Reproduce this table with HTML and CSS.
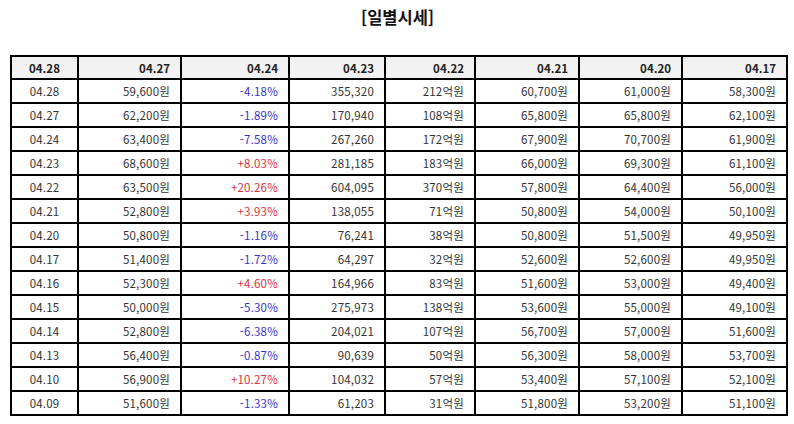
FILE: index.html
```html
<!DOCTYPE html>
<html lang="ko">
<head>
<meta charset="utf-8">
<title>일별시세</title>
<link rel="stylesheet" href="styles.css">
</head>
<body>
<div class="page">
  <h1 class="title">[일별시세]</h1>
  <table class="daily">
    <colgroup>
      <col class="c0"><col class="c1"><col class="c2"><col class="c3"><col class="c4"><col class="c5"><col class="c6"><col class="c7">
    </colgroup>
    <thead>
      <tr><th class="date">04.28</th><th>04.27</th><th>04.24</th><th>04.23</th><th>04.22</th><th>04.21</th><th>04.20</th><th>04.17</th></tr>
    </thead>
    <tbody>
      <tr><td class="date">04.28</td><td>59,600원</td><td class="dn">-4.18%</td><td>355,320</td><td>212억원</td><td>60,700원</td><td>61,000원</td><td>58,300원</td></tr>
      <tr><td class="date">04.27</td><td>62,200원</td><td class="dn">-1.89%</td><td>170,940</td><td>108억원</td><td>65,800원</td><td>65,800원</td><td>62,100원</td></tr>
      <tr><td class="date">04.24</td><td>63,400원</td><td class="dn">-7.58%</td><td>267,260</td><td>172억원</td><td>67,900원</td><td>70,700원</td><td>61,900원</td></tr>
      <tr><td class="date">04.23</td><td>68,600원</td><td class="up">+8.03%</td><td>281,185</td><td>183억원</td><td>66,000원</td><td>69,300원</td><td>61,100원</td></tr>
      <tr><td class="date">04.22</td><td>63,500원</td><td class="up">+20.26%</td><td>604,095</td><td>370억원</td><td>57,800원</td><td>64,400원</td><td>56,000원</td></tr>
      <tr><td class="date">04.21</td><td>52,800원</td><td class="up">+3.93%</td><td>138,055</td><td>71억원</td><td>50,800원</td><td>54,000원</td><td>50,100원</td></tr>
      <tr><td class="date">04.20</td><td>50,800원</td><td class="dn">-1.16%</td><td>76,241</td><td>38억원</td><td>50,800원</td><td>51,500원</td><td>49,950원</td></tr>
      <tr><td class="date">04.17</td><td>51,400원</td><td class="dn">-1.72%</td><td>64,297</td><td>32억원</td><td>52,600원</td><td>52,600원</td><td>49,950원</td></tr>
      <tr><td class="date">04.16</td><td>52,300원</td><td class="up">+4.60%</td><td>164,966</td><td>83억원</td><td>51,600원</td><td>53,000원</td><td>49,400원</td></tr>
      <tr><td class="date">04.15</td><td>50,000원</td><td class="dn">-5.30%</td><td>275,973</td><td>138억원</td><td>53,600원</td><td>55,000원</td><td>49,100원</td></tr>
      <tr><td class="date">04.14</td><td>52,800원</td><td class="dn">-6.38%</td><td>204,021</td><td>107억원</td><td>56,700원</td><td>57,000원</td><td>51,600원</td></tr>
      <tr><td class="date">04.13</td><td>56,400원</td><td class="dn">-0.87%</td><td>90,639</td><td>50억원</td><td>56,300원</td><td>58,000원</td><td>53,700원</td></tr>
      <tr><td class="date">04.10</td><td>56,900원</td><td class="up">+10.27%</td><td>104,032</td><td>57억원</td><td>53,400원</td><td>57,100원</td><td>52,100원</td></tr>
      <tr><td class="date">04.09</td><td>51,600원</td><td class="dn">-1.33%</td><td>61,203</td><td>31억원</td><td>51,800원</td><td>53,200원</td><td>51,100원</td></tr>
    </tbody>
  </table>
</div>
</body>
</html>
```
FILE: styles.css
```css
html, body {
  margin: 0;
  padding: 0;
  background: #ffffff;
}
body {
  font-family: "Noto Sans CJK KR", "Noto Sans", sans-serif;
  color: #333333;
}
.page {
  padding: 7px 9px 0 10px;
}
.title {
  margin: 0;
  height: 48px;
  font-size: 16.5px;
  line-height: 20px;
  font-weight: bold;
  color: #111111;
  text-align: center;
}
.daily {
  width: 776px;
  border: 1px solid #000;
  border-spacing: 0;
  table-layout: fixed;
  font-size: 11.5px;
  letter-spacing: 0.2px;
}
.c0 { width: 67px; }
.c1 { width: 103px; }
.c2 { width: 108px; }
.c3 { width: 96px; }
.c4 { width: 90px; }
.c5 { width: 104px; }
.c6 { width: 103px; }
.c7 { width: 105px; }
.daily th,
.daily td {
  border: 1px solid #000;
  height: 22px;
  padding: 0 10px 0 0;
  line-height: 20px;
  text-align: right;
  white-space: nowrap;
}
.daily th {
  background: #f2f2f2;
  font-weight: bold;
  color: #222222;
  height: 21px;
  letter-spacing: 0;
}
.daily .date {
  text-align: center;
  padding: 0;
}
.daily .dn { color: #3535c8; }
.daily .up { color: #e0323c; }
```
